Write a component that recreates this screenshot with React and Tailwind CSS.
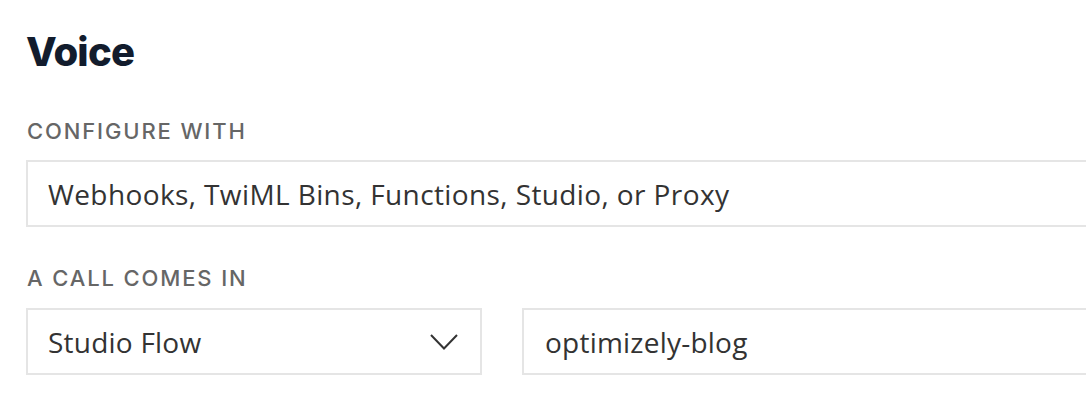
const FIELD_FONT = { fontFamily: '"Open Sans", "Noto Sans", sans-serif' };

function ChevronDown() {
  return (
    <svg width="28" height="16" viewBox="0 0 28 16" fill="none" className="shrink-0">
      <polyline points="1,1 14,14.5 27,1" stroke="#333333" strokeWidth="2" strokeLinejoin="miter" />
    </svg>
  );
}

function Label({ children, className = '' }) {
  return (
    <p
      className={`text-[22px] leading-[28px] font-medium uppercase tracking-[0.085em] text-[#666666] ${className}`}
      style={{ fontFamily: 'Inter, "Liberation Sans", sans-serif' }}
    >
      {children}
    </p>
  );
}

export default function App() {
  return (
    <div className="h-[406px] w-[1086px] overflow-hidden bg-white pl-[26px] pt-[28px]">
      <h2
        className="text-[40px] leading-[48px] font-extrabold tracking-[-0.02em] text-[#121c2d]"
        style={{ fontFamily: 'Inter, "Liberation Sans", sans-serif' }}
      >
        Voice
      </h2>

      {/* Configure with */}
      <Label className="mt-[41px] pl-px">Configure with</Label>
      <div
        className="mt-[15px] flex h-[67px] w-[1080px] items-center border-2 border-[#e5e5e5] pl-[20px] text-[28px] tracking-[0.014em] text-[#333333]"
        style={FIELD_FONT}
      >
        Webhooks, TwiML Bins, Functions, Studio, or Proxy
      </div>

      {/* A call comes in */}
      <Label className="mt-[37px] pl-px">A call comes in</Label>
      <div className="mt-[16px] flex gap-[40px] tracking-[0.014em]" style={FIELD_FONT}>
        <div className="flex h-[67px] w-[456px] shrink-0 items-center justify-between border-2 border-[#e5e5e5] pl-[20px] pr-[22px] text-[28px] text-[#333333]">
          <span>Studio Flow</span>
          <ChevronDown />
        </div>
        <div className="flex h-[67px] w-[600px] shrink-0 items-center border-2 border-[#e5e5e5] pl-[21px] text-[28px] text-[#333333]">
          optimizely-blog
        </div>
      </div>
    </div>
  );
}
